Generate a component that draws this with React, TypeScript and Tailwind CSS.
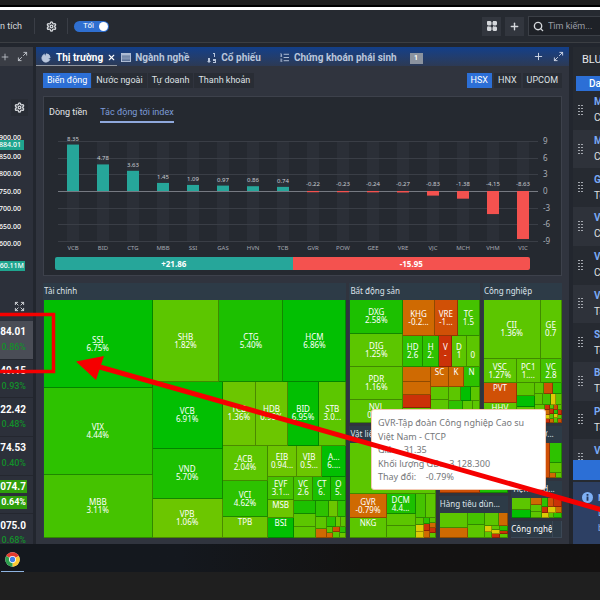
import { ReactNode } from "react";
import clsx from "clsx";
import {
  Expand,
  LayoutGrid,
  ListOrdered,
  Maximize2,
  PieChart,
  Plus,
  Search,
  Settings,
  X,
} from "lucide-react";

const UI_FONT = "font-[Roboto,'Liberation_Sans',sans-serif]";
const CHART_FONT = "font-['Noto_Sans','Open_Sans',sans-serif]";

/* ---------- data ---------- */

const IMPACT = [
  { code: "VCB", value: 8.35 },
  { code: "BID", value: 4.78 },
  { code: "CTG", value: 3.63 },
  { code: "MBB", value: 1.45 },
  { code: "SSI", value: 1.09 },
  { code: "GAS", value: 0.97 },
  { code: "HVN", value: 0.86 },
  { code: "TCB", value: 0.74 },
  { code: "GVR", value: -0.22 },
  { code: "POW", value: -0.23 },
  { code: "GEE", value: -0.24 },
  { code: "VRE", value: -0.27 },
  { code: "VJC", value: -0.83 },
  { code: "MCH", value: -1.38 },
  { code: "VHM", value: -4.15 },
  { code: "VIC", value: -8.63 },
];

const PRICE_AXIS = ["850.00", "800.00", "750.00", "700.00", "650.00", "600.00"];

const INDICES = [
  { price: "84.01", change: "0.86%", selected: true },
  { price: "49.15", change: "0.93%" },
  { price: "22.42", change: "0.48%" },
  { price: "74.53", change: "0.40%" },
  { price: "074.7", change: "0.64%", flash: true },
  { price: "075.0", change: "0.68%" },
];

const WATCHLIST = [
  ["M", "C"],
  ["M", "C"],
  ["G", "Tổ"],
  ["V", "C"],
  ["V", "C"],
  ["V", "Tậ"],
  ["S", "Tổ"],
  ["B", "Tậ"],
  ["P", "Tậ"],
  ["V", "C"],
];

const TONES = {
  green: "bg-[#02bf02]",
  green2: "bg-[#1cc000]",
  green3: "bg-[#2dc200]",
  green4: "bg-[#45c300]",
  lime: "bg-[#5cc600]",
  lime2: "bg-[#6cc600]",
  yellow: "bg-[#dccb05]",
  orange: "bg-[#cf6a02]",
  deep: "bg-[#d05006]",
  red: "bg-[#cb3208]",
  slate: "bg-[#2d3a46]",
};

type Tone = keyof typeof TONES;

type MapNode = {
  size: number;
  kind: "tile" | "row" | "col" | "sector";
  tone?: Tone;
  label?: string;
  value?: string;
  items?: MapNode[];
};

const t = (
  size: number,
  tone: Tone,
  label?: string,
  value?: string
): MapNode => ({ size, kind: "tile", tone, label, value });
const row = (size: number, ...items: MapNode[]): MapNode => ({
  size,
  kind: "row",
  items,
});
const col = (size: number, ...items: MapNode[]): MapNode => ({
  size,
  kind: "col",
  items,
});
const sector = (size: number, label: string, ...items: MapNode[]): MapNode => ({
  size,
  kind: "sector",
  label,
  items,
});

const finance = sector(
  303,
  "Tài chính",
  row(
    1,
    col(
      108,
      t(88, "green", "SSI", "6.75%"),
      t(86, "green3", "VIX", "4.44%"),
      t(63, "green4", "MBB", "3.11%")
    ),
    col(
      193,
      row(
        82,
        t(67, "lime", "SHB", "1.82%"),
        t(64, "green2", "CTG", "5.40%"),
        t(63, "green", "HCM", "6.86%")
      ),
      row(
        155,
        col(
          70,
          t(67, "green", "VCB", "6.91%"),
          t(49, "green2", "VND", "5.70%"),
          t(39, "lime2", "VPB", "1.06%")
        ),
        col(
          123,
          row(
            63,
            t(33, "lime2", "TCB", "1.36%"),
            t(32, "lime2", "HDB", "0.98%"),
            t(31, "green", "BID", "6.95%"),
            t(27, "lime", "STB", "3.0...")
          ),
          row(
            92,
            col(
              45,
              t(36, "lime", "ACB", "2.04%"),
              t(36, "green3", "VCI", "4.62%"),
              t(20, "lime2", "TPB")
            ),
            col(
              78,
              row(
                31,
                t(29, "lime2", "EIB", "0.94..."),
                t(25, "lime2", "VIB", "0.5..."),
                t(24, "green", "A...", "6....")
              ),
              row(
                61,
                col(
                  26,
                  t(24, "green4", "EVF", "3.1..."),
                  t(18, "lime2", "MSB"),
                  t(19, "green", "BSI")
                ),
                col(
                  52,
                  row(
                    24,
                    t(19, "green4", "VC", "2.6"),
                    t(18, "green2", "CT", "6."),
                    t(15, "green2", "O", "5.")
                  ),
                  row(
                    37,
                    col(
                      22,
                      t(13, "green2"),
                      t(13, "lime"),
                      t(11, "lime")
                    ),
                    col(
                      30,
                      row(
                        16,
                        t(13, "green3"),
                        t(9, "lime2"),
                        t(8, "green3")
                      ),
                      row(
                        21,
                        col(11, t(12, "lime"), t(9, "orange")),
                        col(
                          19,
                          row(10, t(9, "green3"), t(5, "lime2"), t(5, "lime")),
                          row(
                            11,
                            col(6, t(6, "lime"), t(5, "orange")),
                            col(7, t(5, "deep"), t(6, "lime")),
                            col(6, t(6, "green3"), t(5, "lime2"))
                          )
                        )
                      )
                    )
                  )
                )
              )
            )
          )
        )
      )
    )
  )
);

const realEstate = sector(
  131,
  "Bất động sản",
  row(
    1,
    col(
      53,
      t(34, "green2", "DXG", "2.58%"),
      t(33, "lime", "DIG", "1.25%"),
      t(33, "lime", "PDR", "1.16%"),
      t(23, "lime", "NVL", "0.9%")
    ),
    col(
      77,
      row(
        36,
        t(32, "orange", "KHG", "-0.2..."),
        t(23, "deep", "VRE", "-1..."),
        t(22, "green4", "TC", "1.5")
      ),
      row(
        31,
        t(20, "green3", "HD", "2.6"),
        t(16, "green3", "H", "2."),
        t(13, "red", "V", "-"),
        t(14, "lime", "D", "1"),
        t(13, "lime", "", "0")
      ),
      row(
        56,
        col(28, t(15, "orange"), t(13, "orange"), t(13, "red"), t(15, "lime")),
        col(
          49,
          row(
            20,
            t(18, "orange", "SC"),
            t(15, "orange", "K"),
            t(16, "green3", "N")
          ),
          row(
            36,
            col(18, t(12, "lime"), t(24, "lime")),
            col(
              31,
              row(14, t(12, "lime"), t(10, "green"), t(9, "lime")),
              row(22, t(14, "green3"), t(10, "lime"), t(7, "lime"))
            )
          )
        )
      )
    )
  )
);

const industry = sector(
  79,
  "Công nghiệp",
  row(59, t(57, "lime", "CII", "1.36%"), t(21, "lime", "GE", "0.7")),
  row(
    24,
    t(33, "lime", "VSC", "1.27%"),
    t(24, "lime", "PC1", "1...."),
    t(21, "green4", "VC", "2.8")
  ),
  row(
    40,
    col(33, t(20, "deep", "PVT"), t(20, "lime", "HHV")),
    col(18, t(13, "lime"), t(11, "green"), t(16, "lime")),
    col(
      27,
      row(11, t(9, "lime"), t(9, "deep"), t(9, "green3")),
      row(11, t(8, "lime"), t(8, "green4"), t(5, "yellow"), t(6, "lime")),
      row(
        18,
        col(10, t(9, "lime"), t(9, "lime")),
        col(5, t(5, "red"), t(5, "orange"), t(4, "yellow"), t(4, "red")),
        col(4, t(4, "lime"), t(5, "red"), t(5, "lime"), t(4, "orange")),
        col(4, t(5, "deep"), t(4, "green3"), t(4, "yellow"), t(5, "lime")),
        col(4, t(6, "lime"), t(4, "red"), t(4, "lime"), t(4, "deep"))
      )
    )
  )
);

const materials = sector(
  86,
  "Vật liệu xây dựng",
  t(51, "lime"),
  row(
    46,
    col(36, t(26, "orange", "GVR", "-0.79%"), t(20, "lime", "NKG")),
    col(29, t(23, "green2", "DCM", "4.4..."), t(11, "lime"), t(12, "lime")),
    col(
      20,
      row(25, t(10, "green4"), t(10, "lime")),
      row(
        21,
        col(8, t(7, "lime"), t(8, "yellow"), t(6, "yellow")),
        col(6, t(6, "green3"), t(8, "red"), t(7, "orange")),
        col(6, t(6, "lime"), t(5, "orange"), t(5, "red"), t(5, "lime"))
      )
    )
  )
);

const consumer = col(
  70,
  sector(68, "Thực phẩm", row(1, t(41, "deep"), t(28, "green2"))),
  sector(
    42,
    "Hàng tiêu dùn...",
    row(
      1,
      col(28, t(15, "lime"), t(10, "orange")),
      col(17, t(12, "green4"), t(13, "lime")),
      col(
        24,
        row(13, t(15, "lime"), t(9, "orange")),
        row(
          12,
          col(8, t(6, "yellow"), t(6, "lime")),
          col(8, t(4, "lime"), t(4, "yellow"), t(4, "red")),
          col(8, t(5, "green3"), t(3, "red"), t(4, "lime"))
        )
      )
    )
  )
);

const others = col(
  51,
  sector(
    53,
    "Năng lượ...",
    row(
      1,
      t(32, "lime"),
      t(6, "deep"),
      col(13, t(21, "green3"), t(9, "lime"), row(6, t(7, "orange"), t(6, "lime")))
    )
  ),
  sector(
    38,
    "Tiện ích d...",
    row(
      1,
      col(19, t(13, "lime"), t(8, "green")),
      col(11, t(8, "orange"), t(6, "lime"), t(7, "lime")),
      col(
        21,
        row(9, t(6, "green3"), t(7, "deep"), t(8, "red")),
        row(6, t(7, "red"), t(8, "yellow"), t(6, "orange")),
        row(6, t(8, "yellow"), t(5, "lime"), t(8, "green3"))
      )
    )
  ),
  row(17, t(43, "slate", "Công nghệ"), t(8, "slate"))
);

const MARKET_MAP = row(
  1,
  finance,
  col(213, row(140, realEstate, industry), row(112, materials, consumer, others))
);

/* ---------- treemap ---------- */

const holdsSector = (node: MapNode): boolean =>
  node.kind === "sector" || !!node.items?.some(holdsSector);

function MapBlock({ node }: { node: MapNode }) {
  const style = { flex: `${node.size} 1 0px` };

  if (node.kind === "tile") {
    const isSlate = node.tone === "slate";
    return (
      <div
        style={style}
        className={clsx(
          "flex min-h-0 min-w-0 flex-col items-center overflow-hidden border-r border-b text-center text-[8px] leading-[8px] whitespace-nowrap text-white",
          isSlate ? "border-[#3c4856]" : "border-black/30",
          node.value || isSlate ? "justify-center" : "justify-start pt-px",
          TONES[node.tone ?? "lime"]
        )}
      >
        {node.label !== undefined && <span>{node.label || "\u00a0"}</span>}
        {node.value && <span>{node.value}</span>}
      </div>
    );
  }

  const children = node.items?.map((item, i) => <MapBlock key={i} node={item} />);

  if (node.kind === "sector") {
    return (
      <section
        style={style}
        className="flex min-h-0 min-w-0 flex-col bg-[#2d3b47] pl-px"
      >
        <h3 className="h-[17px] shrink-0 truncate text-[8px] leading-[16px] text-[#dde3ea]">
          {node.label}
        </h3>
        {children}
      </section>
    );
  }

  return (
    <div
      style={style}
      className={clsx(
        "flex min-h-0 min-w-0",
        node.kind === "col" && "flex-col",
        holdsSector(node) && "gap-[3px]"
      )}
    >
      {children}
    </div>
  );
}

function StockTooltip() {
  return (
    <div
      role="tooltip"
      className="absolute top-[126px] left-[328px] flex h-[81px] w-[175px] flex-col justify-between rounded-[3px] border border-[#f3c9b4] bg-white px-1.5 py-1.5 text-[9px] leading-[13px] whitespace-pre text-[#75777a]"
    >
      <span>GVR-Tập đoàn Công nghiệp Cao su</span>
      <span>Việt Nam - CTCP</span>
      <span>Giá:    31.35</span>
      <span>Khối lượng GD:   3.128.300</span>
      <span>Thay đổi:    -0.79%</span>
    </div>
  );
}

/* ---------- impact chart ---------- */

function ImpactChart() {
  const zero = 66;
  const unit = 5.56;
  const ticks = [9, 6, 3, 0, -3, -6, -9];

  return (
    <svg
      viewBox="0 0 517 130"
      className="block w-full"
      role="img"
      aria-label="Tác động tới index"
    >
      {IMPACT.map((d, i) => (
        <rect
          key={d.code}
          x={23 + i * 30}
          y={16}
          width={12}
          height={100}
          fill="#2b2f37"
        />
      ))}
      {ticks.map((tick) => (
        <g key={tick}>
          <rect
            x={14}
            y={Math.round(zero - tick * unit)}
            width={480}
            height={1}
            fill={tick === 0 ? "#767a82" : "#3a3e46"}
          />
          <text
            x={499}
            y={zero - tick * unit + 3}
            fontSize={8}
            fill="#a9adb5"
          >
            {tick}
          </text>
        </g>
      ))}
      {IMPACT.map((d, i) => {
        const up = d.value > 0;
        const h = Math.max(Math.abs(d.value) * unit, 1);
        return (
          <g key={d.code} textAnchor="middle" fontSize={6}>
            <rect
              x={23 + i * 30}
              y={up ? zero - h : zero}
              width={12}
              height={h}
              fill={up ? "#26a69a" : "#f4524f"}
            />
            <text
              x={29 + i * 30}
              y={up ? zero - h - 4 : zero - 5}
              fill="#c9ccd2"
            >
              {d.value.toFixed(2)}
            </text>
            <text x={29 + i * 30} y={125} fill="#a4a8b0">
              {d.code}
            </text>
          </g>
        );
      })}
    </svg>
  );
}

/* ---------- small pieces ---------- */

function SortIcon() {
  return (
    <svg viewBox="0 0 10 11" className="h-[11px] w-[10px]" fill="#b9c6dc">
      <path d="M1 6h2v3h1L2 11 0 9h1z" />
      <path d="M6 1h2v4H7V2H6zM6 7h3v4H6V10h2V9H6z" />
    </svg>
  );
}

function TableIcon() {
  return (
    <svg viewBox="0 0 11 10" className="h-[9px] w-[10px]" stroke="#b9c6dc">
      <rect x="0.5" y="0.5" width="10" height="9" fill="#5b7196" />
      <path d="M1 2h9" strokeWidth="1.5" />
      <path d="M1 4.500h9M1 6.500h9" strokeWidth="0.7" />
    </svg>
  );
}

function ChromeIcon() {
  return (
    <svg viewBox="0 0 48 48" className="size-[15px]">
      <circle cx="24" cy="24" r="23" fill="#fff" />
      <path d="M24 24 4 12.500A23 23 0 0 1 44 12.500z" fill="#e33b2e" />
      <path d="M24 24 44 12.500A23 23 0 0 1 24 47z" fill="#fcc934" />
      <path d="M24 24v23A23 23 0 0 1 4 12.500z" fill="#2da04e" />
      <circle cx="24" cy="24" r="11" fill="#fff" />
      <circle cx="24" cy="24" r="8.500" fill="#3f7ee8" />
    </svg>
  );
}

function PanelTab({
  icon,
  children,
  active,
}: {
  icon: ReactNode;
  children: ReactNode;
  active?: boolean;
}) {
  return (
    <button
      type="button"
      role="tab"
      aria-selected={!!active}
      className={clsx(
        "flex h-full shrink-0 items-center gap-1 border-b pt-[3px] text-[10px] font-bold whitespace-nowrap",
        active
          ? "border-[#8f959f] text-white"
          : "border-transparent text-[#b9c6dc]"
      )}
    >
      {icon}
      {children}
    </button>
  );
}

function Pill({ children, active }: { children: ReactNode; active?: boolean }) {
  return (
    <button
      type="button"
      aria-pressed={!!active}
      className={clsx(
        "h-[15px] px-1 text-[9px] whitespace-nowrap",
        active ? "bg-[#2c6fd6] text-white" : "bg-[#292d35] text-[#dfe1e5]"
      )}
    >
      {children}
    </button>
  );
}

/* ---------- panels ---------- */

function TopBar() {
  return (
    <header className="flex h-[33px] items-center border-b border-[#3b3e43] bg-[#262a31] text-[9px] text-[#d5d8dc]">
      <span className="w-[34px] pt-0.5">n tích</span>
      <span className="h-4 w-px bg-[#3a3e46]" />
      <button type="button" aria-label="Cài đặt" className="ml-[11px]">
        <Settings className="size-[11px]" strokeWidth={3} />
      </button>
      <span className="ml-[10px] h-4 w-px bg-[#3a3e46]" />
      <button
        type="button"
        role="switch"
        aria-checked="true"
        className="ml-[6px] flex h-[11px] w-[35px] items-center justify-between rounded-full bg-[#2f6fd0] pr-px pl-[9px] text-[8px] text-white"
      >
        Tối
        <span className="size-[9px] rounded-full bg-white" />
      </button>
      <div className="ml-auto flex items-center gap-1">
        <button
          type="button"
          aria-label="Bố cục"
          className="flex size-[19px] items-center justify-center bg-[#32363e]"
        >
          <LayoutGrid className="size-[12px] fill-current" />
        </button>
        <button
          type="button"
          aria-label="Thêm"
          className="flex size-[19px] items-center justify-center bg-[#32363e]"
        >
          <Plus className="size-[11px]" strokeWidth={3} />
        </button>
        <label className="flex h-5 w-[72px] items-center gap-1 border border-r-0 border-[#3b3f46] bg-[#1e2127] pl-1">
          <Search className="size-[11px] shrink-0" strokeWidth={3} />
          <input
            type="text"
            aria-label="Tìm kiếm"
            placeholder="Tìm kiếm..."
            className="w-full min-w-0 bg-transparent pt-0.5 text-[9px] outline-none placeholder:text-[#9a9ea5]"
          />
        </label>
      </div>
    </header>
  );
}

function IndexPanel() {
  return (
    <aside className="flex w-[33px] shrink-0 flex-col overflow-hidden bg-[#2c303a]">
      <div className="flex h-[19px] shrink-0 items-center justify-between bg-[#3a3d45] pr-[5px] text-[#c3c7ce]">
        <Plus className="size-[10px]" />
        <Maximize2 className="size-[11px]" />
      </div>
      <button
        type="button"
        aria-label="Cài đặt biểu đồ"
        className="mt-[33px] ml-[11px] flex size-[17px] shrink-0 items-center justify-center bg-[#282c34] text-[#d5d8dc]"
      >
        <Settings className="size-[11px]" strokeWidth={3} />
      </button>
      <div
        className={clsx(
          "mt-[17px] flex h-[138px] shrink-0 flex-col text-[7px] font-medium text-white",
          CHART_FONT
        )}
      >
        <span className="flex h-[7px] w-[21px] justify-end leading-[10px]">
          900.00
        </span>
        <span className="z-10 -mb-[2px] flex h-[10px] w-6 shrink-0 items-center justify-end bg-[#1fa58f] pr-[3px]">
          884.01
        </span>
        <div className="flex flex-1 flex-col">
          {PRICE_AXIS.map((p) => (
            <span
              key={p}
              className="flex w-[21px] flex-1 items-center justify-end leading-[8px]"
            >
              {p}
            </span>
          ))}
        </div>
        <span className="mt-[8px] flex h-[10px] w-[25px] shrink-0 items-center justify-end bg-[#1fa58f] pr-px">
          60.11M
        </span>
      </div>
      <Expand className="mt-[30px] mb-[9px] ml-[14px] size-[11px] shrink-0 text-[#d5d8dc]" />
      <div className="h-[223px] overflow-hidden">
        <ul className="flex h-[232px] flex-col text-[10px] font-bold">
          {INDICES.map((d) => (
            <li
              key={d.price}
              className={clsx(
                "flex flex-1 flex-col justify-center gap-[3px] border-b border-[#24272f]",
                d.selected && "bg-[#4a4d56]"
              )}
            >
              <span
                className={clsx(
                  "flex h-[13px] w-[27px] items-center justify-end pr-px text-white",
                  d.flash && "bg-[#2f9e0c]"
                )}
              >
                {d.price}
              </span>
              <span
                className={clsx(
                  "flex h-[13px] w-[27px] items-center justify-end pr-px text-[9px]",
                  d.flash
                    ? "bg-[#2f9e0c] text-white"
                    : "font-medium text-[#138f2a]"
                )}
              >
                {d.change}
              </span>
            </li>
          ))}
        </ul>
      </div>
    </aside>
  );
}

function MarketPanel() {
  return (
    <main className="flex min-w-0 flex-1 flex-col bg-[#30343e]">
      <div
        role="tablist"
        className="flex h-[19px] shrink-0 items-center bg-linear-to-b from-[#123f8a] to-[#2c3a55] pr-[5px]"
      >
        <div className="flex h-full gap-1">
          <PanelTab
            active
            icon={
              <PieChart className="mr-px ml-[5px] size-[10px] fill-[#b9c6dc] text-[#b9c6dc]" />
            }
          >
            Thị trường
            <X className="mr-px size-[9px]" strokeWidth={3} />
          </PanelTab>
          <PanelTab icon={<TableIcon />}>Ngành nghề</PanelTab>
        </div>
        <div className="ml-[18px] flex h-full gap-[18px]">
          <PanelTab icon={<SortIcon />}>Cổ phiếu</PanelTab>
          <PanelTab icon={<ListOrdered className="size-[11px]" />}>
            Chứng khoán phái sinh
          </PanelTab>
        </div>
        <span className="mt-[3px] ml-[13px] flex h-[11px] w-[13px] items-center justify-center bg-[#8b939f] text-[7px] font-bold text-white">
          1
        </span>
        <div className="ml-auto flex items-center gap-[9px] text-[#d5dcea]">
          <Plus className="size-[11px]" />
          <Maximize2 className="size-[11px]" />
        </div>
      </div>

      <div className="flex flex-col px-[7px] pt-[7px] pb-[6px]">
        <div className="flex justify-between">
          <div className="flex gap-px">
            <Pill active>Biến động</Pill>
            <Pill>Nước ngoài</Pill>
            <Pill>Tự doanh</Pill>
            <Pill>Thanh khoản</Pill>
          </div>
          <div className="flex gap-0.5">
            <Pill active>HSX</Pill>
            <Pill>HNX</Pill>
            <Pill>UPCOM</Pill>
          </div>
        </div>

        <section className="mt-2 h-[180px] border border-[#3d414b] bg-[#252930]">
          <div className="flex h-[28px] items-start gap-[13px] pt-[9px] pl-[5px] text-[9px] leading-[13px]">
            <button type="button" className="text-[#e3e5e8]">
              Dòng tiền
            </button>
            <button
              type="button"
              className="h-[17px] border-b-2 border-[#8fa8dc] text-[#7d9cd8]"
            >
              <span className="block h-[15px]">Tác động tới index</span>
            </button>
          </div>
          <div className={CHART_FONT}>
            <ImpactChart />
            <div className="mt-[2px] mr-[31px] ml-[11px] flex h-[13px] overflow-hidden rounded-[2px] text-center text-[8px] leading-[13px] font-bold text-white">
              <span className="flex-1 bg-[#26a69a]">+21.86</span>
              <span className="flex-1 bg-[#f4524f]">-15.95</span>
            </div>
          </div>
        </section>

        <div className={clsx("relative mt-[7px] flex h-[255px]", CHART_FONT)}>
          <MapBlock node={MARKET_MAP} />
          <StockTooltip />
        </div>
      </div>
    </main>
  );
}

function WatchPanel() {
  return (
    <aside className="flex w-[27px] shrink-0 flex-col overflow-hidden bg-[#262a31] whitespace-nowrap">
      <h2 className="h-[29px] shrink-0 pl-[9px] text-[11px] leading-[25px] text-[#e6e8eb]">
        BLU
      </h2>
      <button
        type="button"
        className="ml-[3px] h-[15px] shrink-0 bg-[#2c6fd6] pl-[13px] text-left text-[10px] font-medium text-white"
      >
        Da
      </button>
      <div className="h-[369px] shrink-0 overflow-hidden">
        <ul className="flex h-[387px] flex-col">
          {WATCHLIST.map(([code, name], i) => (
            <li
              key={i}
              className={clsx(
                "flex flex-1 items-center gap-[11px] pl-[5px]",
                i % 2 === 1 && "bg-[#2e323a]"
              )}
            >
              <svg viewBox="0 0 5 11" className="h-[11px] w-[5px] shrink-0">
                {[0, 3, 6, 9].map((y) => (
                  <path key={y} d={`M0 ${y}h2v1h-2zM3 ${y}h2v1h-2z`} fill="#a3a7ae" />
                ))}
              </svg>
              <div className="text-[10px] leading-[16px] text-[#dfe1e5]">
                <div className="font-bold text-[#79a9f5]">{code}</div>
                <div>{name}</div>
              </div>
            </li>
          ))}
        </ul>
      </div>
      <div className="h-5 shrink-0 bg-[#2c6fd6]" />
      <div className="mt-[2px] flex flex-1 gap-[5px] bg-[#2d4064] pt-[9px] pl-[9px] text-[9px] leading-[15px] text-[#8fb1ea]">
        <svg viewBox="0 0 12 12" className="mt-px size-[11px] shrink-0">
          <circle cx="6" cy="6" r="6" fill="#7fb0f5" />
          <path d="M5 5h2v4.500H5zM5 2.300h2v1.700H5z" fill="#24375c" />
        </svg>
        <div>
          <div className="font-bold">N</div>
          <div>L</div>
          <div>b</div>
        </div>
      </div>
    </aside>
  );
}

export default function App() {
  return (
    <div
      className={clsx(
        "relative min-h-screen overflow-hidden bg-[#1f1f1f]",
        UI_FONT
      )}
    >
      <div className="h-[7px] border-b-2 border-black" />
      <div className="h-[3px] bg-white" />
      <TopBar />
      <div className="flex bg-[#22262e] pt-1">
        <IndexPanel />
        <div className="w-[3px] shrink-0" />
        <MarketPanel />
        <div className="w-1 shrink-0" />
        <WatchPanel />
      </div>
      <footer className="flex h-[28px] items-end bg-linear-to-r from-[#14181e] from-30% to-[#131212] to-60% pl-px">
        <button
          type="button"
          aria-label="Google Chrome"
          className="flex h-[20px] w-[23px] flex-col items-center border-b border-[#8fb4e0]"
        >
          <ChromeIcon />
        </button>
      </footer>

      {/* callout pointing at the treemap */}
      <svg
        viewBox="0 0 600 600"
        className="pointer-events-none absolute top-0 left-0 w-full"
        fill="none"
      >
        <path d="M-4 314.500H53.500V371.500H-4" stroke="#f50000" strokeWidth="3.500" />
        <path d="M98 366.500 604 510.500" stroke="#f50000" strokeWidth="5" />
        <path d="M76 361.500 104 356 96 380z" fill="#f50000" />
      </svg>
    </div>
  );
}
